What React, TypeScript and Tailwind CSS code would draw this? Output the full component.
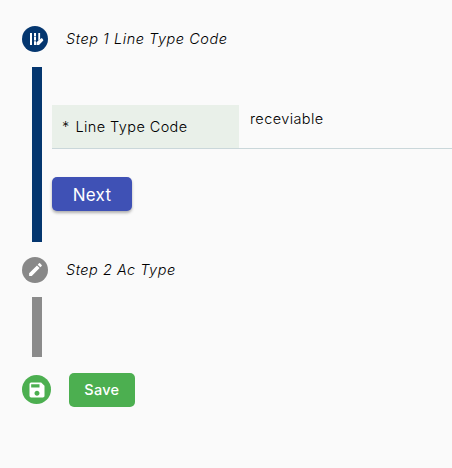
import { MdEdit, MdSave } from "react-icons/md";

function EditRoadIcon() {
  return (
    <svg width="14" height="13" viewBox="0 0 14 13" fill="currentColor" aria-hidden="true">
      <path d="M0 0h2v12H0zM4 0h2v2.9H4zm0 3.6h2v4H4zm0 4.7h2V12H4zM8.3 0h1.8v6.2L8.3 8z" />
      <path d="m6.5 9.3 4.2-3.6c.6-.5 1.3-.4 1.8.1l.5.6c.5.5.4 1.2-.1 1.7L9 12H6.5z" />
    </svg>
  );
}

export default function App() {
  return (
    <main className="h-[468px] w-[452px] overflow-hidden bg-[#fafafa] pt-[26px] pl-[22px] font-['Inter',sans-serif] text-[14.5px] leading-5 font-light text-black">
      <section>
        <div className="flex h-[26px] items-center">
          <span className="flex size-[26px] items-center justify-center rounded-full bg-[#04366f] pt-px pl-[3px] text-white">
            <EditRoadIcon />
          </span>
          <h2 className="ml-[18px] whitespace-nowrap tracking-[0.54px] italic">Step 1 Line Type Code</h2>
        </div>
        <div className="mt-[14.7px] ml-[10px] flex h-[175px]">
          <div className="w-[10px] shrink-0 bg-[#04366f]" />
          <div className="ml-[10px] flex-1 pt-[38.3px]">
            <div className="flex h-[44px] border-b border-[#cad7da]">
              <label className="flex w-[187.4px] items-center bg-[#e9f0e9] pt-px pl-[10px] whitespace-pre">
                <span className="w-[13.5px] pt-px">*</span>
                <span className="tracking-[0.4px]">Line Type Code</span>
              </label>
              <span className="ml-[10.6px] pt-1 tracking-[0.4px]">receviable</span>
            </div>
            <button className="mt-[27.8px] flex h-[34.7px] w-[80px] items-center justify-center rounded-[5px] bg-[#3f51b5] pt-[2px] text-[17px] font-normal tracking-[0.3px] text-white shadow-[0_2px_3px_rgba(0,0,0,0.3)]">Next</button>
          </div>
        </div>
      </section>
      <section className="mt-[15px]">
        <div className="flex h-[26px] items-center">
          <span className="flex size-[26px] items-center justify-center rounded-full bg-[#888] pl-px text-white">
            <MdEdit size={17} />
          </span>
          <h2 className="ml-[18px] whitespace-nowrap tracking-[0.5px] italic">Step 2 Ac Type</h2>
        </div>
        <div className="mt-[14.5px] ml-[10px] h-[60.3px] w-[10px] bg-[#8b8b8b]" />
      </section>
      <div className="mt-[15.3px] flex items-center">
        <span className="flex size-[29.3px] items-center justify-center rounded-full bg-[#4caf50] text-white">
          <MdSave size={20} />
        </span>
        <button className="ml-[17.4px] flex h-[34px] w-[66.3px] items-center justify-center rounded-[5px] bg-[#4caf50] pt-px text-[14.5px] font-medium tracking-[0.3px] text-white">Save</button>
      </div>
    </main>
  );
}
